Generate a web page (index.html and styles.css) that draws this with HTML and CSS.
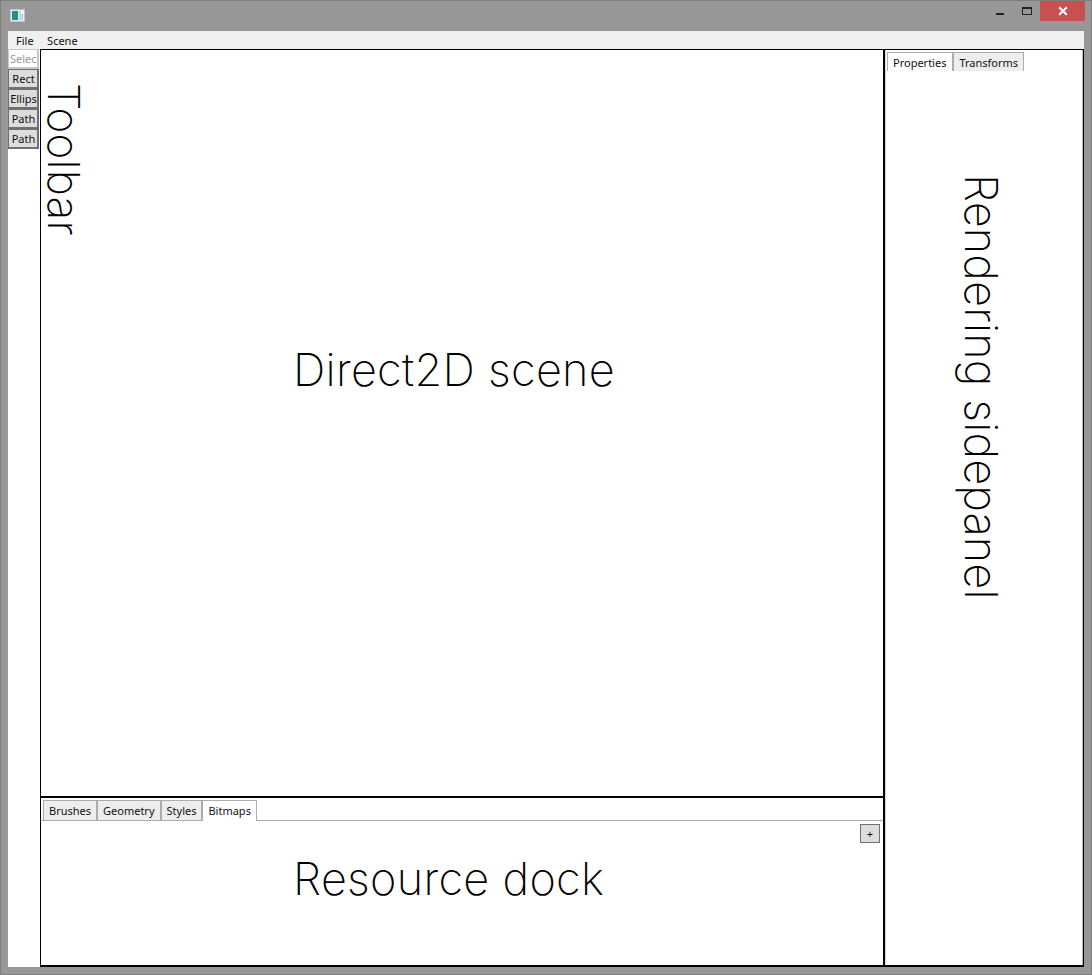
FILE: index.html
```html
<!DOCTYPE html>
<html lang="en">
<head>
    <meta charset="UTF-8">
    <title>Direct2D editor</title>
    <link rel="stylesheet" href="styles.css">
</head>
<body>

<div id="window">
    <div id="title-bar">
        <svg class="app-icon" width="15" height="13" viewBox="0 0 15 13">
            <rect x="0.5" y="0.5" width="14" height="12" fill="#e4ecec" stroke="#bcc6c8"/>
            <rect x="2" y="2" width="6" height="9" fill="#2f8a84"/>
            <rect x="9" y="2" width="4" height="9" fill="#c4d8dc"/>
            <rect x="11" y="2" width="2" height="3" fill="#ffffff"/>
        </svg>
        <div class="window-buttons">
            <div class="win-button min-button">
                <svg width="10" height="10" viewBox="0 0 10 10"><rect x="1" y="7" width="8" height="2" fill="#222"/></svg>
            </div>
            <div class="win-button max-button">
                <svg width="10" height="10" viewBox="0 0 10 10"><rect x="0.5" y="1.5" width="9" height="7" fill="none" stroke="#222"/><rect x="1" y="2" width="8" height="1" fill="#222"/></svg>
            </div>
            <div class="win-button close-button">
                <svg width="10" height="10" viewBox="0 0 10 10"><path d="M1.2 1.2 L8.8 8.8 M8.8 1.2 L1.2 8.8" stroke="#fff" stroke-width="2"/></svg>
            </div>
        </div>
    </div>

    <div id="client">
        <div id="menu">
            <span class="menu-item">File</span>
            <span class="menu-item">Scene</span>
        </div>
        <div id="workspace">
            <div id="toolbar">
                <button class="tool tool-active">Selec</button>
                <button class="tool">Rect</button>
                <button class="tool">Ellips</button>
                <button class="tool">Path</button>
                <button class="tool">Path</button>
            </div>
            <div id="center">
                <div id="scene">
                    <div class="side-label toolbar-label">Toolbar</div>
                    <div class="big-label scene-label">Direct2D scene</div>
                </div>
                <div id="dock">
                    <div class="tabs dock-tabs">
                        <span class="tab">Brushes</span>
                        <span class="tab">Geometry</span>
                        <span class="tab">Styles</span>
                        <span class="tab tab-active">Bitmaps</span>
                    </div>
                    <div class="dock-body">
                        <button class="add-button">+</button>
                        <div class="big-label dock-label">Resource dock</div>
                    </div>
                </div>
            </div>
            <div id="sidepanel">
                <div class="tabs side-tabs">
                    <span class="tab tab-active">Properties</span>
                    <span class="tab">Transforms</span>
                </div>
                <div class="side-label sidepanel-label">Rendering sidepanel</div>
            </div>
        </div>
    </div>
</div>

</body>
</html>
```

FILE: styles.css
```css
html, body {
    margin: 0;
    padding: 0;
    height: 100%;
}

body {
    font-family: 'Liberation Sans', sans-serif;
    background-color: #979797;
}

#window {
    box-sizing: border-box;
    width: 1092px;
    height: 975px;
    padding: 0 7px 7px 7px;
    border: 1px solid #7f7f7f;
    display: flex;
    flex-direction: column;
}

#title-bar {
    height: 30px;
    flex: none;
    display: flex;
    justify-content: space-between;
    align-items: flex-start;
}

.app-icon {
    margin: 8px 0 0 2px;
}

.window-buttons {
    display: flex;
    margin-right: -1px;
}

.win-button {
    height: 20px;
    display: flex;
    justify-content: center;
    align-items: center;
}

.min-button {
    width: 28px;
}

.max-button {
    width: 26px;
}

.close-button {
    width: 45px;
    background-color: #c75050;
}

#client {
    flex: 1;
    min-height: 0;
    background-color: #fff;
    display: flex;
    flex-direction: column;
}

#menu {
    height: 18px;
    flex: none;
    background-color: #f0f0f0;
    display: flex;
    font-family: 'Noto Sans', sans-serif;
    font-size: 11px;
    line-height: 20px;
    color: #111;
    padding-left: 1px;
}

.menu-item {
    padding: 0 7px;
    margin-right: -0.5px;
}

#workspace {
    flex: 1;
    min-height: 0;
    display: flex;
}

#toolbar {
    width: 32px;
    flex: none;
    display: flex;
    flex-direction: column;
    background-color: #fff;
}

.tool {
    box-sizing: border-box;
    width: 31px;
    height: 20px;
    padding: 0 0 0 1px;
    border: 2px solid #707070;
    border-width: 1px 2px 2px 1px;
    background-color: #dddddd;
    font-family: 'Noto Sans', sans-serif;
    font-size: 11px;
    line-height: 16px;
    color: #111;
    overflow: hidden;
    white-space: nowrap;
}

.tool-active {
    background-color: #fff;
    border-color: #c8c8c8;
    color: #999;
    text-align: left;
    padding-left: 1px;
}

#center {
    flex: 1;
    min-width: 0;
    display: flex;
    flex-direction: column;
    border: 1px solid #000;
    border-right: 0;
    border-bottom-width: 2px;
}

#scene {
    height: 746px;
    flex: none;
    position: relative;
    border-bottom: 2px solid #000;
}

#dock {
    flex: 1;
    min-height: 0;
    display: flex;
    flex-direction: column;
}

#sidepanel {
    width: 201px;
    flex: none;
    box-sizing: border-box;
    position: relative;
    border: 1px solid #000;
    border-left-width: 2px;
    border-bottom-width: 2px;
    box-shadow: inset 1px 0 #d8d8d8, inset -1px 0 #b8b8b8;
}

.tabs {
    display: flex;
    height: 20px;
    flex: none;
    font-family: 'Noto Sans', sans-serif;
    font-size: 11px;
    line-height: 19px;
    color: #111;
    border-bottom: 1px solid #acacac;
}

.dock-tabs {
    padding: 2px 0 0 2px;
}

.side-tabs {
    padding: 2px 0 0 2px;
    border-bottom: 0;
    height: 19px;
}

.tab {
    box-sizing: border-box;
    height: 20px;
    padding: 0 5px;
    background-color: #ededed;
    border: 1px solid #acacac;
    border-bottom: 0;
}

.side-tabs .tab {
    height: 19px;
}

.dock-tabs .tab-active {
    height: 21px;
    background-color: #fff;
}

.side-tabs .tab-active {
    background-color: #fff;
    padding-right: 6px;
}

.dock-body {
    flex: 1;
    position: relative;
}

.add-button {
    position: absolute;
    top: 3px;
    right: 3px;
    box-sizing: border-box;
    width: 20px;
    height: 19px;
    padding: 0;
    border: 1px solid #707070;
    background-color: #dddddd;
    font-family: 'Noto Sans', sans-serif;
    font-size: 11px;
    color: #111;
}

.big-label, .side-label {
    position: absolute;
    font-family: 'Inter', sans-serif;
    font-weight: 200;
    color: #000;
    white-space: nowrap;
    line-height: 1;
}

.big-label {
    font-size: 45px;
    left: 252px;
    letter-spacing: 0.3px;
}

.side-label {
    writing-mode: vertical-rl;
    font-size: 45px;
    letter-spacing: 0.15px;
}

.scene-label {
    top: 297px;
}

.dock-label {
    top: 35px;
}

.toolbar-label {
    left: 1px;
    top: 33px;
    font-size: 44px;
    letter-spacing: 0.3px;
}

.sidepanel-label {
    left: 74px;
    top: 124px;
}
```
